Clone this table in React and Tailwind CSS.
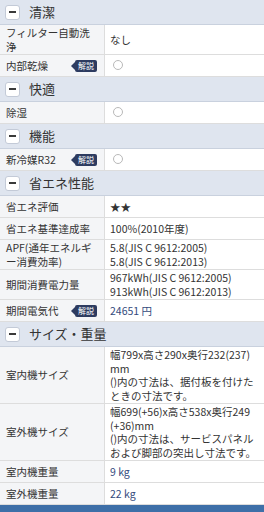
const font = { fontFamily: '"Noto Sans CJK JP", "Noto Sans", sans-serif' }

function Badge() {
  return (
    <span className="relative ml-auto inline-flex h-[12px] items-center rounded-[2px] bg-[#2d3b60] px-[3px] text-[8px] leading-none text-white">
      <span className="absolute left-[-4px] top-1/2 -translate-y-1/2 border-y-[4px] border-r-[4px] border-y-transparent border-r-[#2d3b60]" />
      解説
    </span>
  )
}

function Circle() {
  return <span className="ml-[3px] inline-block h-[10px] w-[10px] rounded-full border border-[#b9b9b9]" />
}

function Section({ title }) {
  return (
    <div className="flex h-[25px] items-center border-b border-[#c9d1de] bg-[#dfe5ef] pl-[5px]">
      <span className="flex h-[15px] w-[15px] items-center justify-center rounded-[3px] border border-[#c3cad7] bg-white">
        <span className="h-[2px] w-[7px] bg-[#3a3a3a]" />
      </span>
      <span className="ml-[9px] text-[13px] text-[#333]">{title}</span>
    </div>
  )
}

function Row({ label, badge, blue, children }) {
  return (
    <div className="flex min-h-[22px] border-b border-[#dddddd]">
      <div className="flex w-[105px] shrink-0 items-center border-r border-[#dddddd] bg-[#f4f5f7] py-[1px] pl-[6px] pr-[7px]">
        <span>{label}</span>
        {badge && <Badge />}
      </div>
      <div className={`flex flex-1 items-center bg-white py-[1px] pl-[5px] ${blue ? 'text-[#334a7c]' : ''}`}>
        <div>{children}</div>
      </div>
    </div>
  )
}

export default function App() {
  return (
    <div className="w-[264px] bg-white text-[10.5px] leading-[13.5px] text-[#333]" style={font}>
      <Section title="清潔" />
      <Row label={<>フィルター自動洗<br />浄</>}>なし</Row>
      <Row label="内部乾燥" badge><Circle /></Row>

      <Section title="快適" />
      <Row label="除湿"><Circle /></Row>

      <Section title="機能" />
      <Row label="新冷媒R32" badge><Circle /></Row>

      <Section title="省エネ性能" />
      <Row label="省エネ評価">★★</Row>
      <Row label="省エネ基準達成率">100%(2010年度)</Row>
      <Row label={<>APF(通年エネルギ<br />ー消費効率)</>}>
        5.8(JIS C 9612:2005)<br />5.8(JIS C 9612:2013)
      </Row>
      <Row label="期間消費電力量">
        967kWh(JIS C 9612:2005)<br />913kWh(JIS C 9612:2013)
      </Row>
      <Row label="期間電気代" badge blue>24651 円</Row>

      <Section title="サイズ・重量" />
      <Row label="室内機サイズ">
        <div className="whitespace-nowrap">
          幅799x高さ290x奥行232(237)<br />mm<br />()内の寸法は、据付板を付けた<br />ときの寸法です。
        </div>
      </Row>
      <Row label="室外機サイズ">
        <div className="whitespace-nowrap">
          幅699(+56)x高さ538x奥行249<br />(+36)mm<br />()内の寸法は、サービスパネル<br />および脚部の突出し寸法です。
        </div>
      </Row>
      <Row label="室内機重量" blue>9 kg</Row>
      <Row label="室外機重量" blue>22 kg</Row>
      <div className="h-[10px] bg-[#3e6fa8]" />
    </div>
  )
}
